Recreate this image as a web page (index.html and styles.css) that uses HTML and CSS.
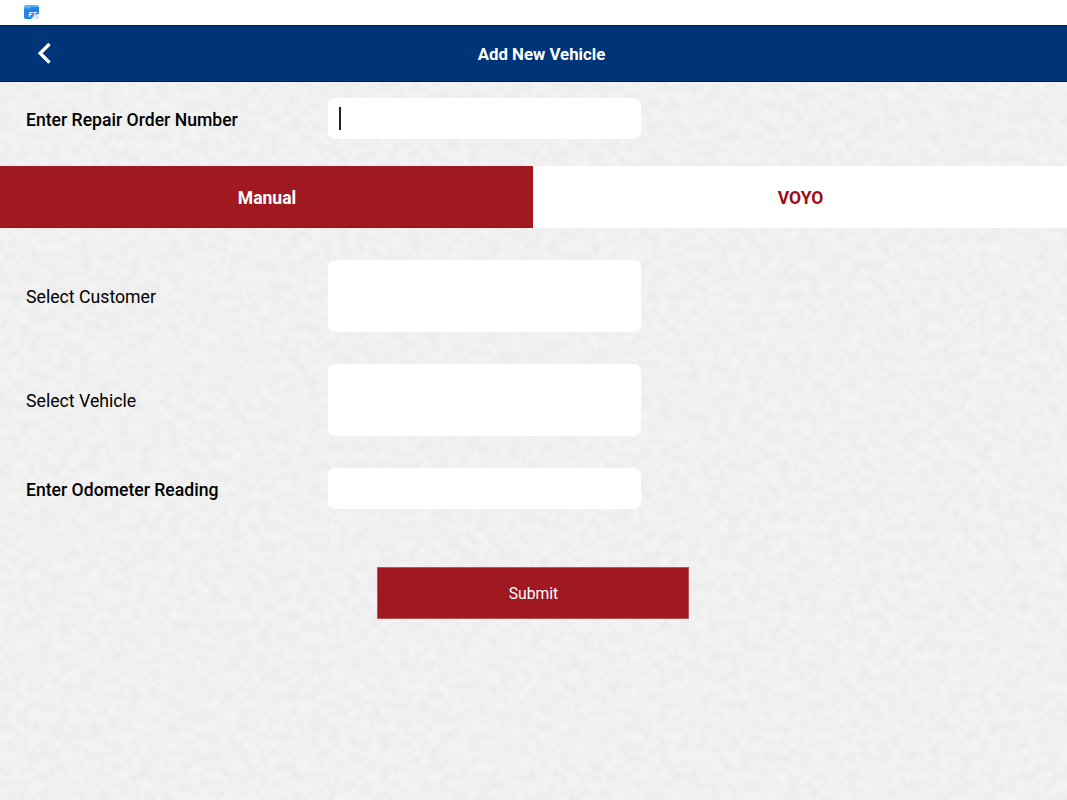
FILE: index.html
```html
<!DOCTYPE html>
<html lang="en">
<head>
    <meta charset="UTF-8">
    <meta name="viewport" content="width=device-width, initial-scale=1.0">
    <title>Add New Vehicle</title>
    <link rel="stylesheet" href="styles.css">
</head>
<body>
    <div class="status-bar">
        <svg class="app-icon" width="15" height="14" viewBox="0 0 15 14">
            <path d="M0 2a2 2 0 0 1 2-2h11a2 2 0 0 1 2 2v2h-15z" fill="#5fb2f0"/>
            <path d="M0 3.500h6l1.500-1.500h7.500v10a2 2 0 0 1-2 2h-11a2 2 0 0 1-2-2z" fill="#1f86e6"/>
            <path d="M7 14c1-2 2-2.500 3.500-2.500 1-2 3-3 4.500-2.500v3a2 2 0 0 1-2 2z" fill="#dfe8f0"/>
            <text x="4.500" y="12" class="app-letters">FT</text>
        </svg>
    </div>
    <header class="top-bar">
        <svg class="back" width="16" height="24" viewBox="0 0 16 24">
            <path d="M13.500 3 L4.200 12.300 L13.500 21.600" fill="none" stroke="#fff" stroke-width="3.400"/>
        </svg>
        <h1>Add New Vehicle</h1>
    </header>
    <main class="page">
        <svg class="paper" width="100%" height="100%">
            <filter id="grain">
                <feTurbulence type="fractalNoise" baseFrequency="0.1" numOctaves="4" seed="7"/>
                <feColorMatrix values="0 0 0 0 0.5  0 0 0 0 0.5  0 0 0 0 0.5  0.25 0 0 0 -0.07"/>
            </filter>
            <rect width="100%" height="100%" filter="url(#grain)"/>
        </svg>
        <div class="form-row">
            <label class="strong">Enter Repair Order Number</label>
            <div class="field short"><span class="caret"></span></div>
        </div>
        <div class="tabs">
            <div class="tab active">Manual</div>
            <div class="tab">VOYO</div>
        </div>
        <form class="fields">
            <div class="form-row">
                <label>Select Customer</label>
                <div class="field tall"></div>
            </div>
            <div class="form-row">
                <label>Select Vehicle</label>
                <div class="field tall"></div>
            </div>
            <div class="form-row">
                <label class="strong">Enter Odometer Reading</label>
                <div class="field short"></div>
            </div>
            <button type="button" class="submit">Submit</button>
        </form>
    </main>
</body>
</html>
```

FILE: styles.css
```css
*{
    padding: 0;
    margin: 0;
    box-sizing: border-box;
}
body{
    height: 800px;
    overflow: hidden;
    display: flex;
    flex-direction: column;
    font-family: Roboto, "Liberation Sans", sans-serif;
    color: #000;
}
.status-bar{
    height: 25px;
    background: #fff;
    padding-left: 24px;
    padding-top: 5px;
}
.app-icon{
    display: block;
}
.app-letters{
    font-family: Roboto, sans-serif;
    font-size: 7px;
    font-weight: 700;
    font-style: italic;
    fill: #fff;
}
.top-bar{
    height: 57px;
    background: #003478;
    border-top: 1px solid #00245a;
    border-bottom: 1px solid #001f4d;
    padding-left: 16px;
    display: flex;
    align-items: center;
    justify-content: center;
    position: relative;
}
.top-bar h1{
    font-size: 16.8px;
    font-weight: 700;
    color: #fff;
}
.back{
    position: absolute;
    left: 36px;
    top: 15px;
}
.page{
    flex: 1;
    position: relative;
    background: #f3f3f3;
    padding-top: 16px;
}
.paper{
    position: absolute;
    top: 0;
    left: 0;
}
.form-row, .tabs, .submit{
    position: relative;
}
.form-row{
    display: flex;
    align-items: center;
    padding-left: 26px;
}
.form-row label{
    width: 302px;
    padding-top: 2px;
    font-size: 17.7px;
}
.form-row .strong{
    font-size: 17.6px;
    font-weight: 500;
}
.field{
    width: 313px;
    background: #fff;
    border-radius: 7px;
    display: flex;
    align-items: center;
    padding-left: 11px;
}
.short{
    height: 41px;
}
.tall{
    height: 72px;
}
.caret{
    width: 2px;
    height: 23px;
    background: #222;
}
.tabs{
    display: flex;
    height: 62px;
    margin-top: 27px;
}
.tab{
    flex: 1;
    display: flex;
    align-items: center;
    justify-content: center;
    padding-top: 2px;
    padding-left: 1px;
    background: #fff;
    color: #a00d15;
    font-size: 17.5px;
    font-weight: 700;
}
.tab.active{
    flex: none;
    width: 533px;
    padding-left: 2px;
    background: #a01820;
    border-bottom: 1px solid #a30f14;
    border-right: 1px solid #b01015;
    color: #fff;
}
.fields{
    display: flex;
    flex-direction: column;
    gap: 32px;
    margin-top: 32px;
}
.submit{
    width: 312px;
    height: 52px;
    margin-top: 26px;
    margin-left: 377px;
    padding-top: 1px;
    padding-left: 1px;
    background: #a01820;
    border: 1px solid #b5545a;
    color: #fff;
    font-family: inherit;
    font-size: 15.7px;
}
```
